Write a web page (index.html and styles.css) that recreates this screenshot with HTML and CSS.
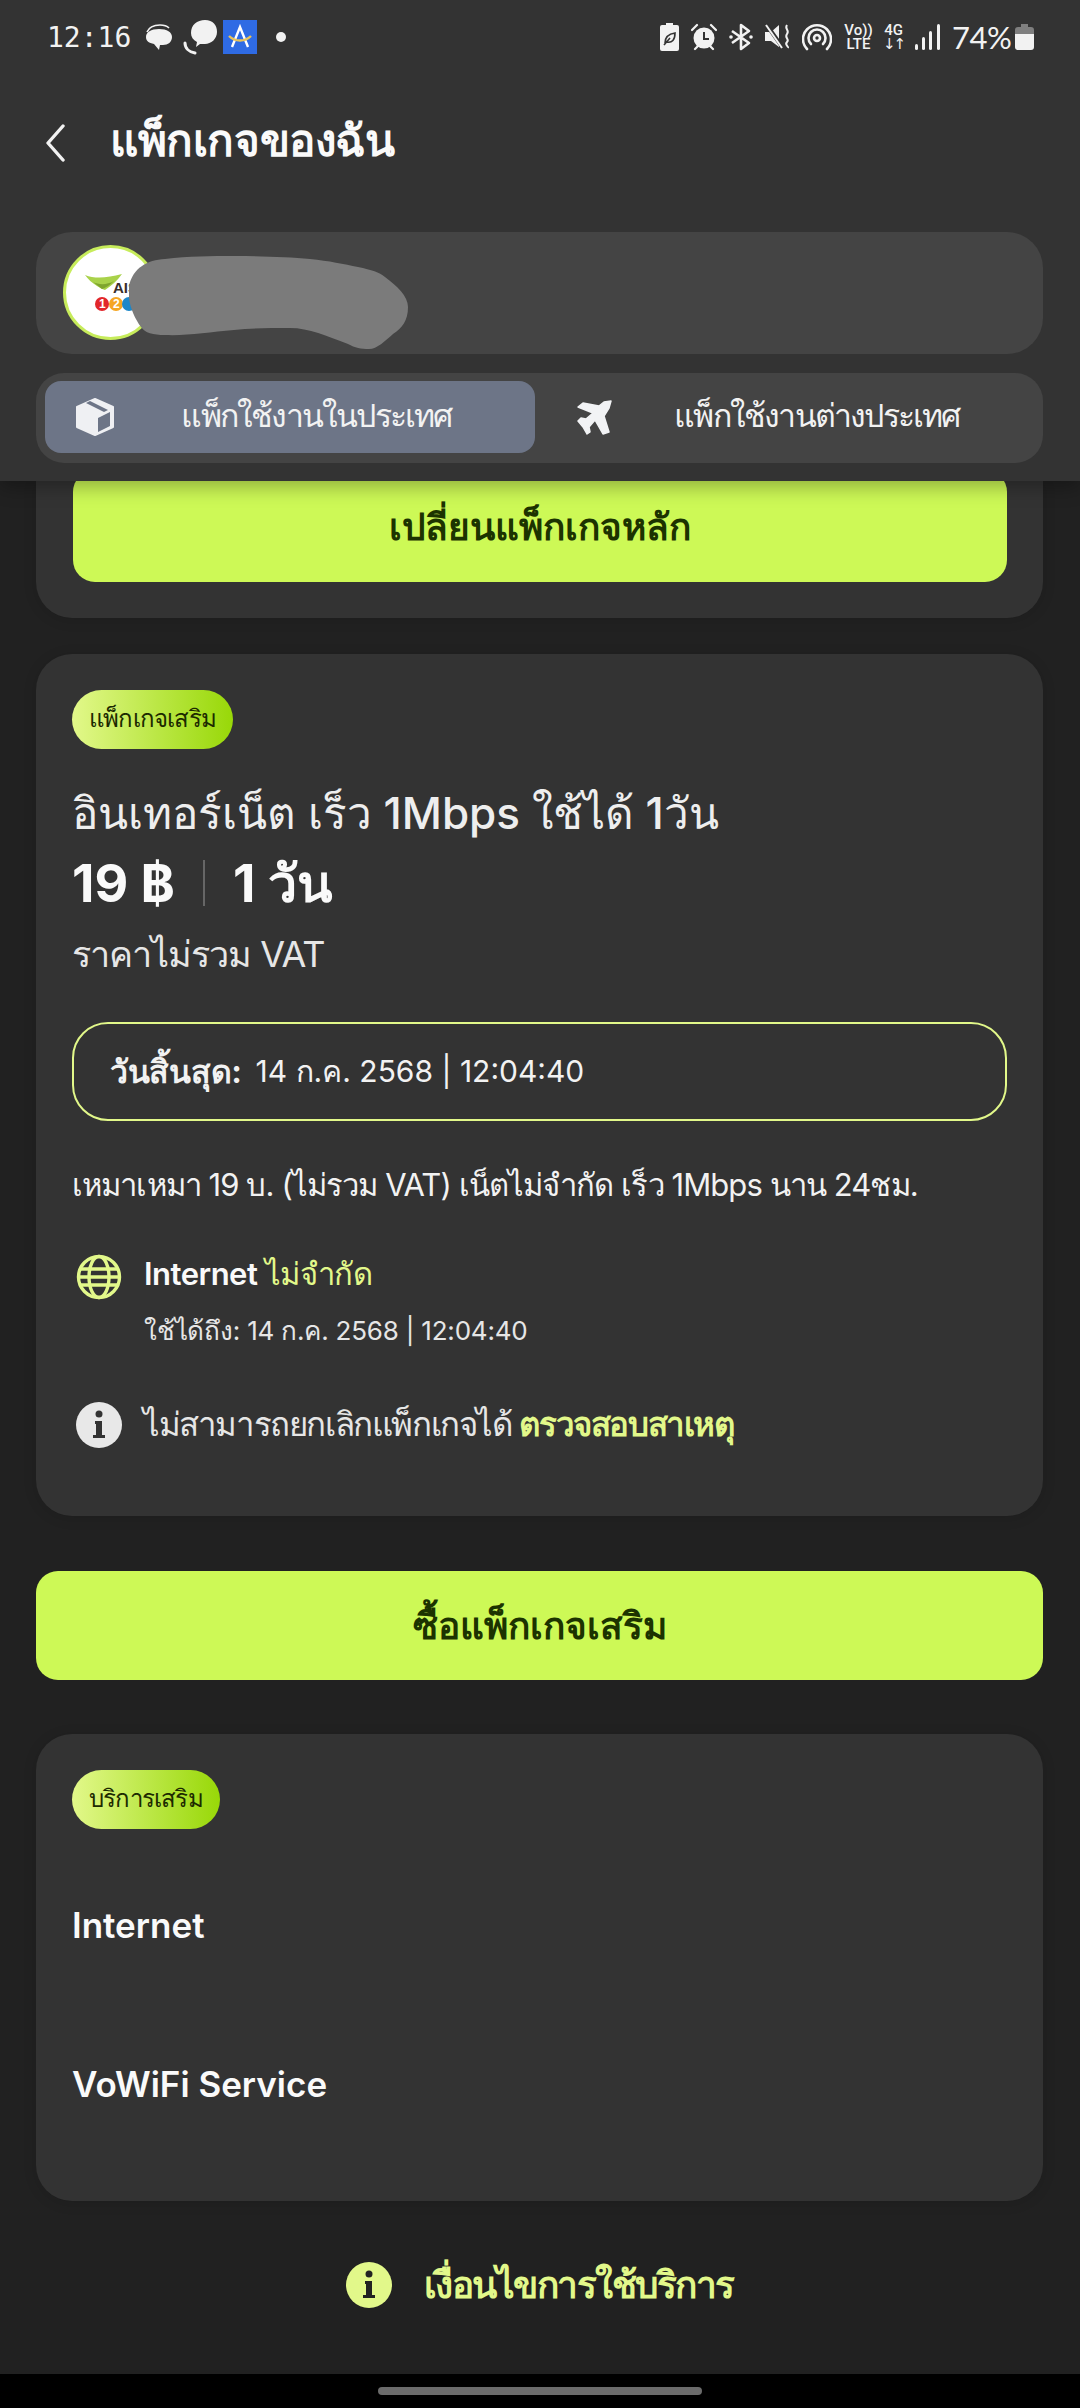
FILE: index.html
```html
<!doctype html>
<html lang="th">
  <head>
    <meta charset="UTF-8" />
    <meta name="viewport" content="width=device-width, initial-scale=1.0" />
    <title>แพ็กเกจของฉัน</title>
    <link rel="stylesheet" href="styles.css">
  </head>
  <body>
    <header class="top">
      <div class="status-bar">
        <div class="status-left">
          <span class="clock">12:16</span>
          <svg class="ic-chat" viewBox="0 0 28 27"><path d="M1 13C1 8 6 5 14 5s13 3 13 8-4 8-9 8h-3l-1 5-5-6c-5-1-8-3-8-7z" fill="#f2f2f2"/><path d="M2 8C4 3 9 1 15 1c4 0 7 1 9 3" fill="none" stroke="#f2f2f2" stroke-width="1.6"/></svg>
          <svg class="ic-callchat" viewBox="0 0 36 36"><path d="M9 14C9 6 15 1 23 1s12 5 12 12-6 12-12 12h-5l-4 3 1-5c-4-2-6-5-6-9z" fill="#f2f2f2"/><path d="M3 24c0 5 4 9 10 10" fill="none" stroke="#f2f2f2" stroke-width="3" stroke-linecap="round"/></svg>
          <svg class="ic-app" viewBox="0 0 34 34"><rect width="34" height="34" fill="#2f6be4"/><path d="M9 27L17 7l8 20" fill="none" stroke="#fff" stroke-width="2.4"/><path d="M6 16c6 6 16 6 22 0" fill="none" stroke="#e8c35a" stroke-width="2.4"/></svg>
          <span class="dot"></span>
        </div>
        <div class="status-right">
          <svg class="ic-batt-leaf" viewBox="0 0 19 28"><path d="M6 0h7v2h4a2 2 0 0 1 2 2v22a2 2 0 0 1-2 2H2a2 2 0 0 1-2-2V4a2 2 0 0 1 2-2h4z" fill="#f2f2f2"/><path d="M5 20c0-6 3-9 10-10 0 7-3 10-8 9m-3 3l6-7" fill="none" stroke="#333" stroke-width="1.6"/></svg>
          <svg class="ic-alarm" viewBox="0 0 26 28"><circle cx="13" cy="15" r="10.500" fill="#f2f2f2"/><path d="M13 9v7h5" fill="none" stroke="#333" stroke-width="2"/><path d="M1 7l5-5M25 7l-5-5M4 26l3-3M22 26l-3-3" stroke="#f2f2f2" stroke-width="2.200" stroke-linecap="round"/></svg>
          <svg class="ic-bt" viewBox="0 0 24 28"><path d="M3 8l17 12-8 6V2l8 6L3 20" fill="none" stroke="#f2f2f2" stroke-width="2.600" stroke-linejoin="round"/><circle cx="2" cy="14" r="1.800" fill="#f2f2f2"/><circle cx="22" cy="14" r="1.800" fill="#f2f2f2"/></svg>
          <svg class="ic-mute" viewBox="0 0 26 28"><path d="M0 9h6l8-7v22L6 18H0z" fill="#f2f2f2"/><path d="M1 1l17 24" stroke="#333" stroke-width="4"/><path d="M1 2l16 23" stroke="#f2f2f2" stroke-width="2"/><path d="M22 2c-3 4 3 5 0 9s3 5 0 8 2 4 1 6" fill="none" stroke="#f2f2f2" stroke-width="2"/></svg>
          <svg class="ic-hotspot" viewBox="0 0 30 28"><circle cx="15" cy="15" r="3" fill="none" stroke="#f2f2f2" stroke-width="2.600"/><path d="M9 21a8.500 8.500 0 1 1 12 0" fill="none" stroke="#f2f2f2" stroke-width="2.600" stroke-linecap="round"/><path d="M5 26a14 14 0 1 1 20 0" fill="none" stroke="#f2f2f2" stroke-width="2.600" stroke-linecap="round"/></svg>
          <span class="net-label"><span>Vo))</span><span>LTE</span></span>
          <span class="net-label net-4g"><span>4G</span><span class="net-arrows">↓↑</span></span>
          <svg class="ic-signal" viewBox="0 0 25 26"><rect x="0" y="20" width="3" height="6" rx="1.500" fill="#f2f2f2"/><rect x="7" y="13" width="3" height="13" rx="1.500" fill="#f2f2f2"/><rect x="14" y="7" width="3" height="19" rx="1.500" fill="#f2f2f2"/><rect x="22" y="0" width="3" height="26" rx="1.500" fill="#f2f2f2"/></svg>
          <span class="batt-text">74%</span>
          <svg class="ic-batt" viewBox="0 0 19 26"><path d="M6 0h7v3h3a3 3 0 0 1 3 3v4H0V6a3 3 0 0 1 3-3h3z" fill="#7f7f7f"/><path d="M0 10h19v13a3 3 0 0 1-3 3H3a3 3 0 0 1-3-3z" fill="#f2f2f2"/></svg>
        </div>
      </div>

      <div class="title-bar">
        <svg class="ic-back" viewBox="0 0 20 38"><path d="M18 2L3 19l15 17" fill="none" stroke="#f2f2f2" stroke-width="3.400" stroke-linecap="round" stroke-linejoin="round"/></svg>
        <h1>แพ็กเกจของฉัน</h1>
      </div>

      <div class="profile">
        <div class="logo">
          <svg viewBox="3 3 89 89"><path d="M22 30c10 4 22 3 37-1-5 7-11 12-17 16-3-1-5-2-8-4-5-3-9-7-12-11z" fill="#a9d24a"/><path d="M30 37c6 3 14 3 21-1-5 5-9 7-12 8z" fill="#7fa52e"/><circle cx="39" cy="59" r="7" fill="#e2262b"/><circle cx="53" cy="59" r="7" fill="#f5a623"/><circle cx="66" cy="59" r="7" fill="#1b87c9"/></svg>
          <span class="logo-text">AIS</span>
          <span class="logo-num logo-num-1">1</span>
          <span class="logo-num logo-num-2">2</span>
        </div>
        <svg class="blob" viewBox="0 0 280 93"><path d="M0 30C4 12 18 4 36 3 60 0 82 0 105 0c30 0 55 1 76 3 19 2 34 5 48 8 14 3 21 5 27 10 12 9 23 19 23 30 0 14-6 21-15 27-8 7-16 15-24 15-8 0-14-1-21-5-21-8-39-16-58-16-21 0-39 0-56 2-25 2-47 6-69 5-12 0-20-2-24-8C4 60-2 45 0 30z" fill="#7b7b7b"/></svg>
      </div>

      <nav class="tabs">
        <a class="tab tab-active">
          <svg class="tab-icon" viewBox="0 0 38 38"><path d="M19 1L37 9v20L19 37 1 29V9z" fill="#eff0f3" stroke="#eff0f3" stroke-width="2" stroke-linejoin="round"/><path d="M22 20l12-6v14l-12 6z" fill="#6d7587"/><path d="M10 5l18 9 4-2L14 3z" fill="#6d7587"/></svg>
          <span>แพ็กใช้งานในประเทศ</span>
        </a>
        <a class="tab tab-plain">
          <svg class="tab-icon" viewBox="0 0 35 35"><path d="M34 1l-2 7-5 8 5 16-6 2-8-14-6 7 1 5-3 2-4-7-5-6 3-3 5 1 7-6L1 7l5-4 16 3 5-4z" fill="#f2f3f5" stroke="#f2f3f5" stroke-width="1.500" stroke-linejoin="round"/></svg>
          <span>แพ็กใช้งานต่างประเทศ</span>
        </a>
      </nav>
    </header>

    <main class="content">
      <section class="card card-cut">
        <button class="btn btn-cut">เปลี่ยนแพ็กเกจหลัก</button>
      </section>

      <section class="card card-pack">
        <span class="chip">แพ็กเกจเสริม</span>
        <h2 class="pack-name">อินเทอร์เน็ต เร็ว 1Mbps ใช้ได้ 1วัน</h2>
        <div class="pack-price">
          <span>19 ฿</span>
          <i class="divider"></i>
          <span>1 วัน</span>
        </div>
        <p class="vat">ราคาไม่รวม VAT</p>
        <div class="expire">
          <strong>วันสิ้นสุด:</strong>
          <span>14 ก.ค. 2568 | 12:04:40</span>
        </div>
        <p class="desc">เหมาเหมา 19 บ. (ไม่รวม VAT) เน็ตไม่จำกัด เร็ว 1Mbps นาน 24ชม.</p>
        <div class="benefit">
          <svg class="ic-globe" viewBox="0 0 46 46"><g fill="none" stroke="#e2f88a" stroke-width="3.400"><circle cx="23" cy="23" r="20.500"/><ellipse cx="23" cy="23" rx="10" ry="20.500"/><path d="M5 15h36M5 31h36M2.500 23h41"/></g></svg>
          <div>
            <div class="benefit-name">Internet <em>ไม่จำกัด</em></div>
            <div class="benefit-date">ใช้ได้ถึง: 14 ก.ค. 2568 | 12:04:40</div>
          </div>
        </div>
        <div class="notice">
          <svg class="ic-info" viewBox="0 0 46 46"><circle cx="23" cy="23" r="23" fill="#e8e8e8"/><path d="M19 19h7v14h3v3H17v-3h3V22h-1z" fill="#333"/><circle cx="23" cy="12" r="3.500" fill="#333"/></svg>
          <span>ไม่สามารถยกเลิกแพ็กเกจได้ <b>ตรวจสอบสาเหตุ</b></span>
        </div>
      </section>

      <button class="btn btn-buy">ซื้อแพ็กเกจเสริม</button>

      <section class="card card-extra">
        <span class="chip">บริการเสริม</span>
        <div class="extra-row">Internet</div>
        <div class="extra-row">VoWiFi Service</div>
      </section>

      <a class="terms">
        <svg class="ic-info" viewBox="0 0 46 46"><circle cx="23" cy="23" r="23" fill="#e2f88a"/><path d="M19 19h7v14h3v3H17v-3h3V22h-1z" fill="#222"/><circle cx="23" cy="12" r="3.500" fill="#222"/></svg>
        <span>เงื่อนไขการใช้บริการ</span>
      </a>
    </main>

    <div class="nav-bar"><span class="nav-pill"></span></div>
  </body>
</html>
```

FILE: styles.css
```css
* {
  box-sizing: border-box;
}

html,
body {
  margin: 0;
  height: 2408px;
  overflow: hidden;
}

body {
  display: flex;
  flex-direction: column;
  background-color: #212121;
  color: #f2f2f2;
  font-family: "Inter", "Noto Sans", sans-serif;
}

/* Header */
.top {
  position: relative;
  z-index: 2;
  height: 481px;
  background-color: #333;
  box-shadow: 0 6px 18px rgba(0, 0, 0, 0.3);
  padding: 0 37px 0 36px;
}

.status-bar {
  display: flex;
  justify-content: space-between;
  align-items: center;
  height: 74px;
  margin: 0 9px 0 11px;
}

.status-left,
.status-right {
  display: flex;
  align-items: center;
}

.clock {
  font-family: "DejaVu Sans Mono", monospace;
  font-size: 28px;
  width: 98px;
}

.ic-chat {
  width: 28px;
  height: 27px;
  margin-right: 9px;
}

.ic-callchat {
  width: 36px;
  height: 36px;
  margin-right: 5px;
}

.ic-app {
  width: 34px;
  height: 34px;
  margin-right: 19px;
}

.dot {
  width: 10px;
  height: 10px;
  border-radius: 50%;
  background-color: #f2f2f2;
}

.status-right svg {
  flex-shrink: 0;
}

.ic-batt-leaf {
  width: 19px;
  height: 28px;
  margin-right: 12px;
}

.ic-alarm {
  width: 26px;
  height: 28px;
  margin-right: 12px;
}

.ic-bt {
  width: 24px;
  height: 28px;
  margin-right: 12px;
}

.ic-mute {
  width: 26px;
  height: 28px;
  margin-right: 11px;
}

.ic-hotspot {
  width: 30px;
  height: 28px;
  margin-right: 13px;
}

.net-label {
  display: flex;
  flex-direction: column;
  align-items: center;
  width: 27px;
  margin-right: 11px;
  font-family: "Roboto", sans-serif;
  font-size: 15px;
  font-weight: 500;
  line-height: 14px;
}

.net-4g {
  width: 21px;
}

.net-arrows {
  font-family: "DejaVu Sans", sans-serif;
  font-size: 15px;
  letter-spacing: -2px;
}

.ic-signal {
  width: 25px;
  height: 26px;
  margin-right: 12px;
}

.batt-text {
  font-family: "Lato", sans-serif;
  font-size: 31px;
  font-weight: 400;
  letter-spacing: -0.5px;
  width: 63px;
}

.ic-batt {
  width: 19px;
  height: 26px;
}

.title-bar {
  display: flex;
  align-items: center;
  height: 138px;
}

.ic-back {
  width: 20px;
  height: 38px;
  margin: 0 45px 0 9px;
}

h1 {
  margin: 0;
  padding-bottom: 6px;
  font-size: 44px;
  font-weight: 600;
  letter-spacing: -0.4px;
  color: #fafafa;
}

.profile {
  position: relative;
  height: 122px;
  margin-top: 20px;
  padding: 13px 27px;
  background-color: #444;
  border-radius: 36px;
}

.logo {
  position: relative;
  width: 95px;
  height: 95px;
  border-radius: 50%;
  background-color: #fff;
  border: 3px solid #c7ec5b;
  overflow: hidden;
}

.logo svg {
  display: block;
  width: 100%;
  height: 100%;
}

.logo-text {
  position: absolute;
  left: 47px;
  top: 32px;
  font-family: "Liberation Sans", sans-serif;
  font-size: 15px;
  font-weight: 700;
  line-height: 15px;
  color: #3a2f2b;
}

.logo-num {
  position: absolute;
  top: 49px;
  font-family: "Liberation Sans", sans-serif;
  font-size: 12px;
  font-weight: 700;
  line-height: 14px;
  color: #fff;
}

.logo-num-1 {
  left: 33px;
}

.logo-num-2 {
  left: 47px;
}

.blob {
  position: absolute;
  left: 93px;
  top: 24px;
  width: 280px;
  height: 93px;
}

.tabs {
  display: flex;
  height: 90px;
  margin-top: 19px;
  padding: 8px 9px 10px;
  background-color: #444;
  border-radius: 28px;
}

.tab {
  display: flex;
  align-items: center;
  border-radius: 16px;
  font-size: 32px;
  font-weight: 500;
  letter-spacing: -1.8px;
  color: #f2f2f2;
}

.tab span {
  flex: 1;
  text-align: center;
  padding-bottom: 4px;
}

.tab-active {
  width: 490px;
  padding: 0 16px 0 31px;
  background-color: #6d7587;
}

.tab-plain {
  flex: 1;
  padding: 0 12px 0 42px;
}

.tab-icon {
  width: 38px;
  height: 38px;
}

.tab-plain .tab-icon {
  width: 35px;
  height: 35px;
}

/* Content */
.content {
  flex: 1;
  padding: 0 37px 0 36px;
}

.card {
  background-color: #333;
  border-radius: 36px;
  box-shadow: 0 2px 14px rgba(0, 0, 0, 0.12);
}

.card-cut {
  display: flow-root;
  height: 137px;
  padding: 0 36px 0 37px;
  border-radius: 0 0 36px 36px;
}

.btn {
  display: block;
  width: 100%;
  border: 0;
  border-radius: 22px;
  background-color: #cdf956;
  color: #1c3300;
  font-family: inherit;
  font-size: 37px;
  font-weight: 700;
}

.btn-cut {
  height: 112px;
  margin-top: -11px;
}

.card-pack {
  height: 862px;
  margin-top: 36px;
  padding: 36px;
}

.chip {
  display: inline-block;
  height: 59px;
  padding: 0 17px;
  border-radius: 30px;
  background: linear-gradient(90deg, #e2f88a, #98d808);
  color: #1c2a00;
  font-size: 24px;
  letter-spacing: -0.8px;
  line-height: 57px;
}

.pack-name {
  margin: 29px 0 0;
  font-size: 44px;
  font-weight: 500;
  line-height: 70px;
  color: #eee;
}

.pack-price {
  display: flex;
  align-items: center;
  height: 70px;
  font-size: 52px;
  font-weight: 700;
  color: #fafafa;
}

.divider {
  width: 2px;
  height: 46px;
  margin: 0 28px;
  background-color: #666;
}

.vat {
  margin: 11px 0 0;
  font-size: 36px;
  letter-spacing: -1px;
  line-height: 50px;
  color: #e6e6e6;
}

.expire {
  display: flex;
  align-items: center;
  gap: 14px;
  height: 99px;
  margin-top: 43px;
  padding: 0 36px;
  border: 2px solid #e2f88a;
  border-radius: 36px;
  font-size: 30px;
}

.expire strong {
  font-size: 32px;
  font-weight: 700;
  letter-spacing: -0.3px;
}

.desc {
  margin: 39px 0 0;
  font-size: 31px;
  letter-spacing: -0.9px;
  line-height: 50px;
}

.benefit {
  display: flex;
  gap: 22px;
  margin-top: 38px;
}

.ic-globe {
  width: 46px;
  height: 46px;
  margin: 6px 0 0 4px;
}

.benefit-name {
  font-size: 31px;
  font-weight: 600;
  letter-spacing: -0.5px;
  line-height: 52px;
  color: #fafafa;
}

.benefit-name em {
  font-style: normal;
  font-weight: 500;
  color: #e2f88a;
}

.benefit-date {
  margin-top: 7px;
  font-size: 26px;
  letter-spacing: -0.2px;
  line-height: 48px;
  color: #e6e6e6;
}

.notice {
  display: flex;
  align-items: center;
  gap: 21px;
  margin-top: 43px;
  padding-left: 4px;
  font-size: 33px;
  letter-spacing: -1.4px;
  color: #e6e6e6;
}

.notice b {
  color: #e2f88a;
}

.ic-info {
  width: 46px;
  height: 46px;
  flex-shrink: 0;
}

.btn-buy {
  height: 109px;
  margin-top: 55px;
}

.card-extra {
  height: 467px;
  margin-top: 54px;
  padding: 36px;
}

.extra-row {
  font-size: 35px;
  font-weight: 600;
  line-height: 60px;
  color: #fafafa;
}

.card-extra .chip {
  margin-bottom: 66px;
}

.extra-row + .extra-row {
  margin-top: 99px;
}

.terms {
  display: flex;
  justify-content: center;
  align-items: center;
  gap: 32px;
  margin-top: 54px;
  font-size: 37px;
  font-weight: 700;
  letter-spacing: -1.5px;
  color: #e2f88a;
}

.nav-bar {
  display: flex;
  justify-content: center;
  align-items: center;
  height: 34px;
  background-color: #000;
}

.nav-pill {
  width: 324px;
  height: 8px;
  border-radius: 4px;
  background-color: #6b6b6b;
}
```
